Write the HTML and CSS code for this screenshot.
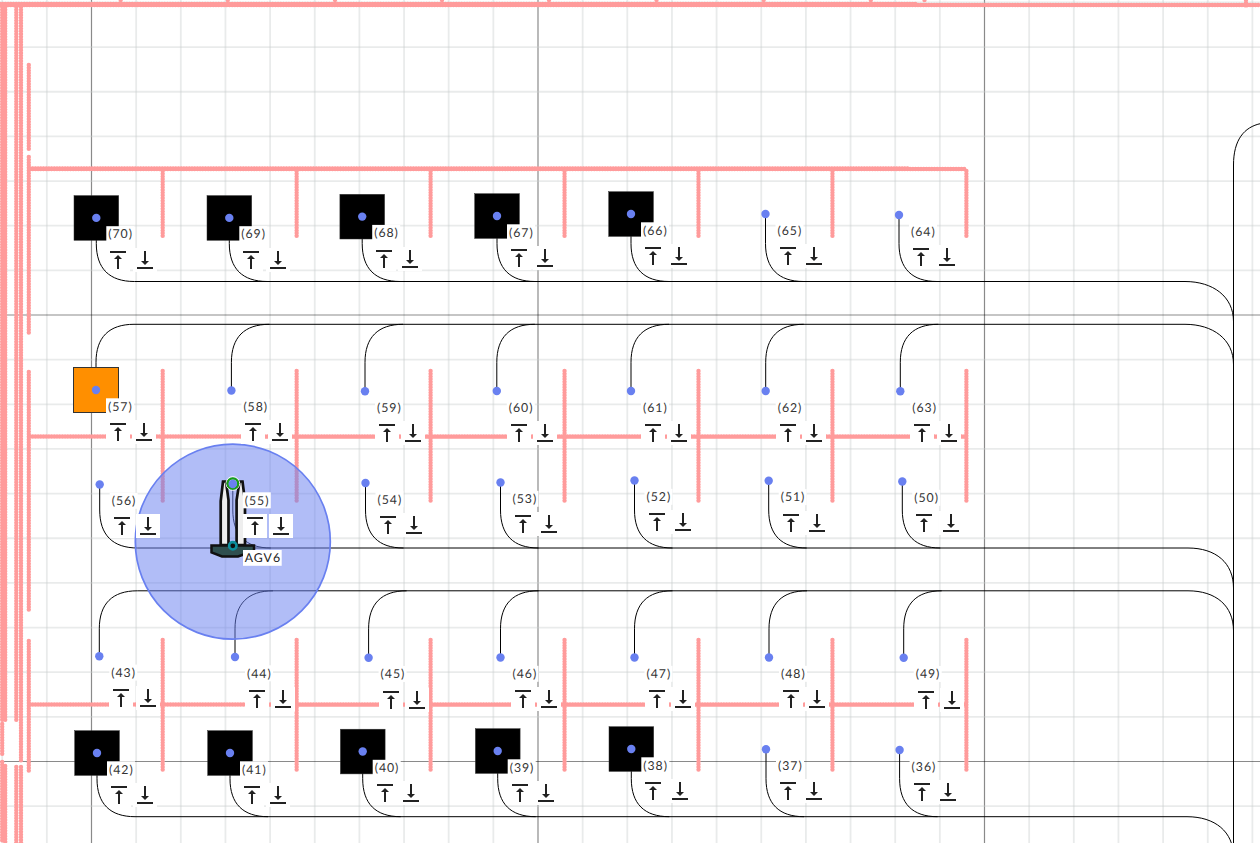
FILE: index.html
```
<!DOCTYPE html>
<html lang="en">
<head>
<meta charset="utf-8">
<title>AGV floor map</title>
<link rel="stylesheet" href="styles.css">
</head>
<body>
<svg class="map" id="map" viewBox="0 0 1260 843" width="1260" height="843"></svg>
<script src="map.js"></script>
</body>
</html>
```

FILE: styles.css
```
body { margin: 0; background: #fff; overflow: hidden; }
.map { display: block; font-family: Lato, "Open Sans", sans-serif; }
.minor { stroke: #c8cecd; stroke-opacity: .4; stroke-width: 1.8; }
.major { stroke: #000; stroke-opacity: .46; stroke-width: 1.2; }
.wall { stroke: #ff9b9b; stroke-width: 4.4; stroke-linecap: round; stroke-dasharray: 0 2.7; fill: none; }
.path { stroke: #000; stroke-width: 1; fill: none; }
.load { fill: #000; stroke: #333; stroke-width: .5; }
.load.orange { fill: #ff8f00; stroke: #333; stroke-width: 1; }
.dot { fill: #6980f0; }
.box { fill: #fff; }
.label { font-size: 12.3px; letter-spacing: .95px; fill: #333; text-rendering: geometricPrecision; }
.label.name { fill: #222; }
.icon { fill: #222; }
.zone { fill: #6980f0; fill-opacity: .52; stroke: #6980f0; stroke-width: 1.7; }
.fork { fill: #eee; stroke: #111; stroke-width: 2.7; }
.base { fill: #2f4f4f; stroke: #111; stroke-width: 2.5; }
.goal { fill: none; stroke: #16a016; stroke-width: 2.3; }
.halo { fill: none; stroke: #fff; stroke-width: 1; }
.center { fill: #111; stroke: #0d8e9c; stroke-width: 2.6; }
```

FILE: map.js
```
const out = [];
const line = (c, x1, y1, x2, y2) => out.push(`<line class="${c}" x1="${x1}" y1="${y1}" x2="${x2}" y2="${y2}"/>`);
const path = d => out.push(`<path class="path" d="${d}"/>`);
const STEP = 44.65;

// grid
for (let k = -2; k < 28; k++) {
  const x = 91.5 + STEP * k;
  line(k % 10 === 0 ? 'major' : 'minor', x, 0, x, 843);
}
for (let k = -7; k < 13; k++) {
  const y = 315 + STEP * k;
  line(k % 10 === 0 ? 'major' : 'minor', 0, y, 1260, y);
}

// walls
line('wall', 0, 4, 918, 4);
line('wall', 0, 5, 1260, 5);
[120.7, 227.8, 335, 442, 549, 656.5, 763.7, 870.8, 924.5].forEach(x => line('wall', x, 0, x, 2));
line('wall', 1246, 0, 1246, 8);
[[2.2, 7, 720], [5.2, 7, 720], [16.3, 7, 720], [21, 7, 762],
 [2.2, 724, 755], [2.2, 762, 843], [5.2, 766, 843], [16.3, 767, 843], [21, 767, 843],
 [28.8, 65, 151], [28.8, 157, 335], [28.8, 372, 610], [28.8, 641, 771]
].forEach(([x, a, b]) => line('wall', x, a, x, b));
line('wall', 30, 168.4, 910, 168.4);
line('wall', 30, 169, 966, 169);
line('wall', 30, 436.5, 966, 436.5);
line('wall', 30, 704.5, 966, 704.5);
for (let i = 0; i < 7; i++) {
  const x = 162.7 + i * 133.95;
  line('wall', x, 171, x, 236);
  line('wall', x, 371, x, 502);
  line('wall', x, 640, x, 771);
}

// rows: ids, dot positions, lane height and lane side
const rows = [
  { lane: 281.5, dir: 1, load: 5, end: 1185, n: [[70,96.3,217.9],[69,229.3,217.9],[68,362.2,216.6],[67,497,216],[66,631,214],[65,765.5,214],[64,899,215]] },
  { lane: 324.3, dir: -1, load: 0, end: 1185, n: [[57,96,390],[58,231.4,390.5],[59,365,391.3],[60,496.8,391],[61,631,391],[62,765.7,391],[63,900.3,391.2]] },
  { lane: 548, dir: 1, load: 0, end: 1188, n: [[56,99.7,484.5],[55,232.8,484],[54,365.5,483],[53,500.5,482.5],[52,634.5,480.5],[51,768.7,480.8],[50,902.3,481.5]] },
  { lane: 590.8, dir: -1, load: 0, end: 1188, n: [[43,99.3,656.3],[44,235,657],[45,368.6,657.7],[46,500.5,657.5],[47,634.5,657.5],[48,769,657.5],[49,903.7,657.7]] },
  { lane: 816.7, dir: 1, load: 5, end: 1187, n: [[42,97,753],[41,230,753],[40,362.7,751.5],[39,497.7,751],[38,631.3,749],[37,766,749.3],[36,899.6,750]] }
];
rows.forEach(r => {
  path(`M${r.n[0][1] + 38} ${r.lane}H${r.end}C${r.end + 28} ${r.lane} 1233.5 ${r.lane + 15} 1233.5 ${r.lane + 40}`);
  r.n.forEach(([, x, y]) => {
    const s = r.lane - r.dir * 38;
    path(`M${x} ${y}V${s}C${x} ${s + r.dir * 25} ${x + 13} ${r.lane} ${x + 38} ${r.lane}`);
  });
});
path('M1233.5 843V165C1233.5 140 1244 127 1261 123.5');

rows.forEach(r => r.n.forEach(([id, x, y], i) => {
  if (i < r.load) out.push(`<rect class="load" x="${x - 22.3}" y="${y - 22.3}" width="44.7" height="44.7"/>`);
  if (id === 57) out.push(`<rect class="load orange" x="73.5" y="367.5" width="45" height="45"/>`);
}));

// vehicle
out.push('<circle class="zone" cx="232.8" cy="541.7" r="97.5"/>');
out.push('<path class="fork" d="M223 481.5H226L228.5 500V545H220.7V501ZM239.5 481.5H242.5L245 501V545H236.6V500Z"/>');
out.push('<path class="base" d="M211.5 545.5H254V551L238 556.5H222L211.5 552.5Z"/>');

const UP = 'M8 11h3v10h2V11h3l-4-4-4 4zM4 3v2h16V3H4z';
const DOWN = 'M16 13h-3V3h-2v10H8l4 4 4-4zM4 19v2h16v-2H4z';
rows.forEach(r => r.n.forEach(([id, x, y]) => {
  if (id === 55) out.push('<circle class="halo" cx="232.8" cy="483.5" r="6.8"/><circle class="goal" cx="232.8" cy="483.5" r="5.2"/>');
  out.push(`<circle class="dot" cx="${x}" cy="${y}" r="4.2"/>`);
  out.push(`<rect class="box" x="${x + 10}" y="${y + 8.3}" width="28" height="16"/>`);
  out.push(`<text class="label" x="${x + 12}" y="${y + 20.5}">(${id})</text>`);
  [[UP, 10], [DOWN, 36.2]].forEach(([d, dx]) => out.push(
    `<g transform="translate(${Math.round(x + dx)} ${Math.round(y + 29.9)})"><rect class="box" width="24" height="24"/><path class="icon" d="${d}"/></g>`));
}));
out.push('<circle class="center" cx="232.8" cy="545.8" r="3.7"/>');
out.push('<rect class="box" x="243" y="550" width="38.7" height="15.8"/><text class="label name" x="244.8" y="562.1">AGV6</text>');
document.getElementById('map').innerHTML = out.join('');
```
